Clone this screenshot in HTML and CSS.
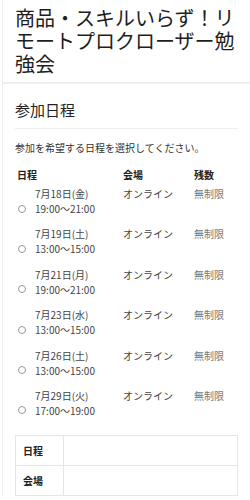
FILE: index.html
```html
<!DOCTYPE html>
<html lang="ja">
<head>
  <meta charset="UTF-8" />
  <title>参加日程</title>
  <link rel="stylesheet" href="styles.css">
</head>
<body>
  <div class="page">
    <header class="event-head">
      <h1>商品・スキルいらず！リモートプロクローザー勉強会</h1>
    </header>

    <section class="card">
      <h2>参加日程</h2>
      <p class="lead">参加を希望する日程を選択してください。</p>

      <table class="schedule">
        <thead>
          <tr>
            <th class="col-date">日程</th>
            <th class="col-place">会場</th>
            <th>残数</th>
          </tr>
        </thead>
        <tbody>
          <tr>
            <td>
              <label class="slot">
                <span class="date">7月18日(金)</span>
                <input type="radio" name="nittei" value="0718" />
                <span class="time">19:00〜21:00</span>
              </label>
            </td>
            <td class="place">オンライン</td>
            <td class="left">無制限</td>
          </tr>
          <tr>
            <td>
              <label class="slot">
                <span class="date">7月19日(土)</span>
                <input type="radio" name="nittei" value="0719" />
                <span class="time">13:00〜15:00</span>
              </label>
            </td>
            <td class="place">オンライン</td>
            <td class="left">無制限</td>
          </tr>
          <tr>
            <td>
              <label class="slot">
                <span class="date">7月21日(月)</span>
                <input type="radio" name="nittei" value="0721" />
                <span class="time">19:00〜21:00</span>
              </label>
            </td>
            <td class="place">オンライン</td>
            <td class="left">無制限</td>
          </tr>
          <tr>
            <td>
              <label class="slot">
                <span class="date">7月23日(水)</span>
                <input type="radio" name="nittei" value="0723" />
                <span class="time">13:00〜15:00</span>
              </label>
            </td>
            <td class="place">オンライン</td>
            <td class="left">無制限</td>
          </tr>
          <tr>
            <td>
              <label class="slot">
                <span class="date">7月26日(土)</span>
                <input type="radio" name="nittei" value="0726" />
                <span class="time">13:00〜15:00</span>
              </label>
            </td>
            <td class="place">オンライン</td>
            <td class="left">無制限</td>
          </tr>
          <tr>
            <td>
              <label class="slot">
                <span class="date">7月29日(火)</span>
                <input type="radio" name="nittei" value="0729" />
                <span class="time">17:00〜19:00</span>
              </label>
            </td>
            <td class="place">オンライン</td>
            <td class="left">無制限</td>
          </tr>
        </tbody>
      </table>

      <table class="summary">
        <tr>
          <th>日程</th>
          <td></td>
        </tr>
        <tr>
          <th>会場</th>
          <td></td>
        </tr>
      </table>
    </section>
  </div>
</body>
</html>
```

FILE: styles.css
```css
/* Base */
* {
  box-sizing: border-box;
}

body {
  margin: 0;
  background: #fff;
  color: #222;
  font-family: "Noto Sans CJK JP", "Noto Sans", sans-serif;
}

.page {
  margin-left: 2px;
  border-left: 1px solid #eee;
}

/* Titre */
.event-head {
  padding: 6px 12px 7px 12px;
  border-bottom: 2px solid #eee;
}

.event-head h1 {
  margin: 0;
  font-size: 20px;
  line-height: 23px;
  font-weight: 400;
  color: #1e1e1e;
}

/* Carte */
.card {
  padding: 16px 12px 0 12px;
}

.card h2 {
  margin: 0;
  font-size: 15px;
  line-height: 20px;
  font-weight: 400;
  color: #222;
  padding-bottom: 8px;
  border-bottom: 1px solid #eee;
}

.lead {
  margin: 11px 0 0 0;
  font-size: 10px;
  line-height: 15px;
  color: #333;
}

/* Tableau des dates */
.schedule {
  margin-top: 8px;
  width: 100%;
  border-collapse: collapse;
  font-size: 10px;
  line-height: 15px;
}

.schedule th {
  text-align: left;
  font-weight: 700;
  color: #222;
  padding: 4px 2px 0 2px;
}

.schedule .col-date {
  width: 106px;
}

.schedule .col-place {
  width: 71px;
}

.schedule td {
  vertical-align: top;
  padding: 4px 2px 6.4px 2px;
  color: #444;
}

.schedule td.left {
  color: #777;
}

.slot {
  display: grid;
  grid-template-columns: 8px auto;
  column-gap: 9px;
  align-items: center;
  margin-left: 1px;
  cursor: pointer;
}

.slot .date {
  grid-column: 2;
  grid-row: 1;
  color: #444;
}

.slot .time {
  grid-column: 2;
  grid-row: 2;
  color: #444;
}

.slot input[type="radio"] {
  grid-column: 1;
  grid-row: 2;
  appearance: none;
  -webkit-appearance: none;
  width: 8px;
  height: 8px;
  margin: 0;
  border: 1px solid #999;
  border-radius: 50%;
  background: #fff;
}

.slot input[type="radio"]:checked {
  background: #666;
  box-shadow: inset 0 0 0 1.5px #fff;
}

/* Récapitulatif */
.summary {
  margin-top: 11px;
  width: 100%;
  border-collapse: collapse;
  font-size: 10px;
}

.summary th,
.summary td {
  border: 1px solid #e6e6e6;
  height: 30px;
}

.summary th {
  width: 48px;
  text-align: left;
  padding: 0 0 0 7px;
  font-weight: 700;
  color: #222;
}
```
